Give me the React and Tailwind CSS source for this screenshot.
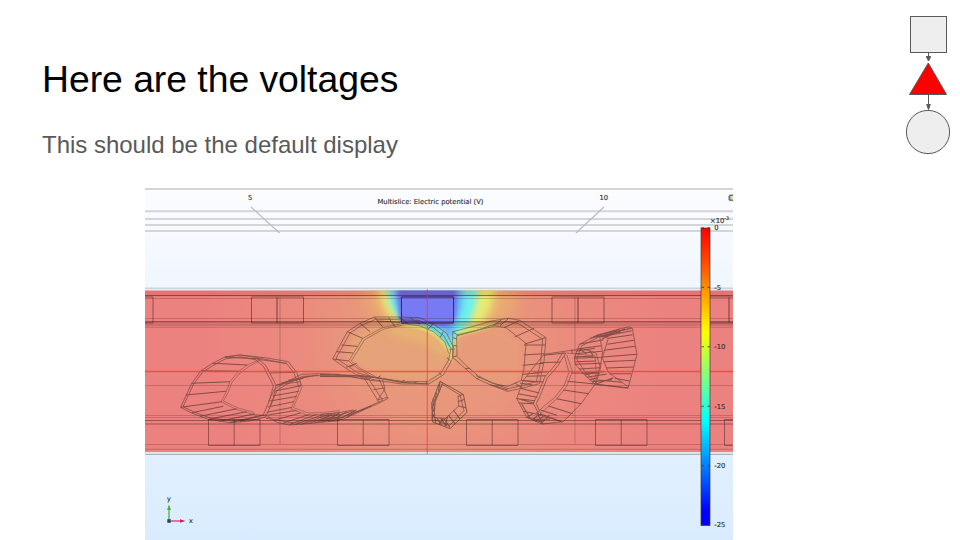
const TOP_ELECTRODES = [
  [127, 26], [251.5, 52], [401.5, 52], [552, 52], [703, 52],
];
const BOTTOM_ELECTRODES = [208.5, 337.5, 466.5, 595.5, 724.5];
const TICKS = [
  [0, '0'], [59.5, '-5'], [119, '-10'], [178.5, '-15'], [238, '-20'], [297, '-25'],
];

function Field() {
  return (
    <g>
      <rect x="145" y="290.5" width="588" height="161.5" fill="url(#base)" />
      <g clipPath="url(#slab)">
        <path d="M362 270L372 318L405 330L440 340L451 357L458 342L490 330L510 316L520 270Z" fill="#e9b46c" opacity=".8" filter="url(#blur7)" />
        <path d="M371 270L387 314L402 324L440 337L450 353L458 337L482 326L491 308L500 270Z" fill="#e8ec74" filter="url(#blur4)" />
        <path d="M380 270L392 308L403 322L423 325L444 336L451 350L455 335L469 324L476 304L481 270Z" fill="#6cf2ee" filter="url(#blur3)" />
        <path d="M389 270L396 304L403 322L425 324L441 329L450 342L454 330L462 306L465 270Z" fill="#6eaaf6" filter="url(#blur3)" />
        <path d="M396 270L400 321L425 323L445 326L455 318L458 270Z" fill="#6668e8" filter="url(#blur2)" />
        <path d="M354 334L378 322L402 325L424 328L440 339L448 353L445 372L431 382L405 381L372 374L346 357Z" fill="#e6a278" filter="url(#blur2)" />
        <path d="M458 336L495 328L520 343L519 376L506 387L480 380L456 358Z" fill="#e79c7a" filter="url(#blur2)" opacity=".95" />
        <path d="M380 325L424 326L441 337L449 352L446 358L425 344L396 337Z" fill="#e6b970" filter="url(#blur4)" opacity=".7" />
        <path d="M405 325.5Q434 326 448 349" fill="none" stroke="#dfdc70" strokeWidth="3" filter="url(#blur1)" />
        <path d="M424 324.5Q441 330 450.5 348" fill="none" stroke="#58dde6" strokeWidth="3.2" filter="url(#blur1)" />
        <path d="M451 346L451 362M458 334.5L495 324.5" fill="none" stroke="#d5df70" strokeWidth="2.5" filter="url(#blur1)" />
        <rect x="402" y="297" width="52" height="26.5" fill="#787af4" />
        <rect x="145" y="290" width="588" height="6.5" fill="#b02020" opacity=".14" />
        <rect x="145" y="321" width="588" height="4" fill="#702020" opacity=".16" />
      </g>
    </g>
  );
}

function Structure() {
  return (
    <g fill="none" stroke="#4b2020" strokeWidth="1">
      <path opacity=".58" d="M145 295.5H733M145 321.8H733" />
      <path opacity=".25" d="M145 298.5H733M145 318.5H733M145 325.3H733M145 327.3H733M145 385.5H733M145 415.5H733M145 417.5H733M145 444.5H733M145 449.3H733" />
      <path opacity=".5" d="M145 420.5H733M145 424H733" />
      <path opacity=".25" d="M280 297V444M575 297V444" />
      <g opacity=".55">
        {TOP_ELECTRODES.map(([x, w]) => (
          <path key={x} d={`M${x} 297h${w}v26h-${w}z`} />
        ))}
        <path d="M277 297v26M578 297v26M729 297v26" strokeWidth="1.3" />
      </g>
      <path d="M401.5 297H453.5V323H401.5Z" stroke="#252570" opacity=".75" />
      <g opacity=".5">
        {BOTTOM_ELECTRODES.map((x) => (
          <path key={x} d={`M${x} 419.5h51.5v26h-51.5zM${x + 25.7} 419.5v26`} />
        ))}
      </g>
    </g>
  );
}

function SliceLines() {
  return (
    <g fill="none">
      <path d="M145 371.5H733" stroke="#fb3a34" strokeWidth="1.3" opacity=".75" />
      <path d="M427.3 289V454" stroke="#f0302c" strokeWidth="1.2" opacity=".55" />
    </g>
  );
}

function Cells() {
  return (
    <g fill="none" stroke="#35201c" strokeWidth="2.4" strokeLinejoin="round" opacity=".55">
      <g transform="translate(140 285) scale(.33333)">
        <path d="M122 367L155 295L183 257L218 235L255 216L300 210L350 218L378 242L408 300L398 348L378 395L330 408L270 413L205 403L155 384Z" />
        <path d="M129 365L161 297L188 261L222 240L258 221L302 216L346 224L370 244L400 302L388 348L370 389L326 402L272 407L208 398L158 379Z" />
        <path d="M365 220L322 240L295 260L270 290L258 322L243 350L290 374L340 388L378 392M360 226L328 244L300 264L276 292L264 323L250 348L294 369L342 382" opacity=".7" />
        <path strokeWidth="3.2" d="M122 367L245 350M137 330L258 319M155 295L270 290M183 257L295 259M218 235L322 240M255 216L358 222M155 383L250 364M180 394L290 371M205 403L320 380M238 409L345 386M268 413L374 390M300 410L350 393" />
        <path d="M255 216L300 210L375 218L445 230L470 262L484 300M350 218L440 236L462 264L476 304M360 224L440 235M388 264L466 262M408 300L482 290" />
        <path d="M385 350L404 312L440 290L485 268L540 266L600 268M390 362L412 315L444 296L488 274L540 272L600 274" />
        <path d="M482 296L470 330L453 372L500 390L550 388L600 383M488 302L476 330L460 368L505 384L552 382L600 377" opacity=".7" />
        <path d="M375 388L410 412L448 420L500 416L550 411L600 407M378 400L414 405L450 413L500 410L600 400" />
        <path strokeWidth="2.9" d="M405 318L484 302M398 333L476 319M391 348L470 334M384 366L462 350M380 382L456 367M410 300L490 280M424 294L510 273M445 286L534 270M385 390L470 376M404 405L482 384M430 414L506 389M448 419L530 388M464 419L550 389M484 418L567 388M505 416L586 387M524 414L600 388M545 412L600 394M565 410L600 400" />
      </g>
      <g transform="translate(320 285) scale(.33333)">
        <path strokeWidth="3.4" d="M0 268L90 271L170 278L245 292L326 297M0 274L90 275L150 285" />
        <path d="M45 270L120 273L136 285L178 354L120 380L70 402L0 409M120 279L146 282L188 346L125 374L68 396L0 403M176 280L204 340L178 354M188 284L195 312L172 346M150 286L184 289M160 314L194 309M172 345L202 337M0 388L60 383L100 375M0 394L60 389L110 375" />
        <path strokeWidth="3.2" d="M0 407L36 386M20 406L58 384M40 404L79 381M62 400L108 376M80 395L135 370M105 384L155 362" />
        <path d="M38 222L82 140L120 115L163 96L236 96L300 98L345 120L380 145L402 190L396 225L370 270L326 297L245 297L165 285L110 270L75 248Z" />
        <path d="M48 220L90 144L125 121L167 103L236 104L297 106L340 128L372 153L393 191L386 225L362 265L323 290L247 289L168 278L114 264L82 242Z" />
        <path d="M86 228L128 160L188 128L245 115L298 122L340 140L374 170L386 205M94 228L134 164L192 132L245 121M86 228L112 250L160 278M94 228L120 250L175 280" opacity=".8" />
        <path strokeWidth="3" d="M38 222L86 228M50 200L99 204M65 180L112 184M82 140L128 160M120 115L150 140M163 96L188 126M170 108L240 112M205 97L226 126M236 96L265 116M270 98L300 118M82 246L110 235M110 270L150 275M78 246L100 242M170 280L182 272M242 291L254 286M282 294L292 289M320 297L318 287M364 271L357 262M392 228L381 218M402 192L389 193M370 140L360 158M340 115L325 132M240 108L300 108" />
        <path d="M360 289L430 328L441 382L390 431L338 411L335 355Z" strokeWidth="3" />
        <path d="M366 297L420 330L432 377L388 422L345 404L342 355Z" />
        <path d="M360 289L368 295L346 350L342 397L375 402L416 363L414 335" />
        <path strokeWidth="3.2" d="M360 292L355 320M350 322L343 352M340 340L336 405M413 335L429 328M415 350L434 343M416 363L438 368M400 375L420 402M385 390L405 416M372 400L390 428M362 400L380 424M351 400L364 420M344 398L347 413M335 370L344 355M336 385L344 370M336 400L344 386M370 401L357 418M383 394L375 423" />
      </g>
      <g transform="translate(440 285) scale(.33333)">
        <path d="M38 140L100 124L155 108L205 100L240 106L318 158L312 230L298 296L248 309L202 319L150 299L110 281L75 250L38 217Z" />
        <path d="M50 153L108 137L160 119L202 110L236 116L308 163L302 230L289 290L244 302L204 311L155 292L116 274L84 247L51 214Z" />
        <path d="M50 150L110 136L165 123L198 128L258 175L252 250L244 286L204 304L160 296L108 272" />
        <path strokeWidth="3" d="M38 140L55 152M38 158L51 162M38 182L50 182M38 216L50 213M75 250L91 250M110 281L122 276M150 299L204 315M165 303L190 302M184 105L160 122M205 101L180 122M238 107L192 128M282 130L224 156M318 158L254 177M316 180L252 180M314 206L251 210M310 235L248 241M304 263L247 268M294 291L244 286M278 300L240 294M248 309L224 294" />
        <path d="M312 208L380 198L430 192L468 204L480 245L465 298L425 354L370 410L306 417L260 397L230 340L250 286L290 235Z" />
        <path d="M370 200L347 238L315 275L292 330L280 355L298 390L365 410M378 203L354 242L322 279L300 333L289 356L303 388" />
        <path d="M380 208L397 260L380 304L352 340L324 365L300 388M373 212L387 262L373 300L344 338L315 361L292 382M380 204L465 213L469 265L457 298" opacity=".8" />
        <path strokeWidth="3.1" d="M310 211L376 204M301 233L360 231M280 261L322 261M260 274L318 272M250 287L311 291M240 310L298 324M234 326L292 337M230 340L282 355M236 354L282 356M250 379L302 390M260 397L306 412M275 403L330 403M290 382L308 416M300 386L365 410M325 363L398 386M350 341L424 356M370 315L447 326M382 289L466 297M393 264L479 265M302 375L350 391M245 357L270 399M280 385L260 397M294 391L275 405M310 394L287 410M328 390L304 415M395 193L397 207M420 192L440 207M448 196L460 212M240 342L285 347" />
      </g>
      <g transform="translate(560 285) scale(.33333)">
        <path d="M43 220L58 178L115 149L207 125L217 130L231 209L204 310L106 298L74 270L46 238Z" />
        <path d="M51 220L65 183L120 154L207 131M113 149L145 160L127 218L145 262L204 305M118 150L128 200L120 255L106 300M50 222L76 262L109 292" />
        <path strokeWidth="3.2" d="M58 178L130 164M52 192L123 182M46 206L126 199M43 220L127 217M45 238L124 235M57 252L121 248M74 270L117 260M88 285L111 278M106 298L160 278M115 150L215 130M122 156L215 137M145 160L218 149M142 178L221 166M132 196L226 184M127 216L231 208M131 230L228 226M139 249L221 246M148 266L213 266M164 280L209 288M106 298L204 308M113 285L186 292M48 199L105 190M43 215L100 214M47 230L108 228M65 265L132 260M80 277L140 267M95 290L156 284M90 160L182 140M100 155L180 132M127 161L195 131" />
      </g>
    </g>
  );
}

function ColorScale() {
  return (
    <g>
      <rect x="701" y="228" width="9" height="297.5" fill="url(#rainbow)" stroke="#333" strokeOpacity=".65" strokeWidth="1" />
      <g fill="#333" stroke="#333" strokeWidth=".15" fontSize="6.8">
        {TICKS.map(([offset, label]) => (
          <g key={label}>
            <path d={`M701.5 ${227.8 + offset}h2.5M707.5 ${227.8 + offset}h2.5`} stroke="#333" strokeWidth=".8" />
            <text x="714.3" y={230 + offset}>{label}</text>
          </g>
        ))}
        <text x="710" y="222.5">×10<tspan fontSize="4.8" dy="-3">-3</tspan></text>
      </g>
    </g>
  );
}

function PotentialPlot() {
  return (
    <svg className="block h-[353px] w-[588px]" viewBox="145 187 588 353" fontFamily="'DejaVu Sans', sans-serif">
      <defs>
        <linearGradient id="sky" x2="0" y2="1">
          <stop stopColor="#fbfcff" />
          <stop offset=".3" stopColor="#f0f6ff" />
          <stop offset=".75" stopColor="#e1f0ff" />
          <stop offset="1" stopColor="#d9ecff" />
        </linearGradient>
        <radialGradient id="base" gradientUnits="userSpaceOnUse" cx="435" cy="335" r="230">
          <stop stopColor="#e89d7b" />
          <stop offset=".35" stopColor="#e9967c" />
          <stop offset=".6" stopColor="#eb8a7e" />
          <stop offset="1" stopColor="#ec827f" />
        </radialGradient>
        <linearGradient id="rainbow" x2="0" y2="1">
          <stop stopColor="#f00" />
          <stop offset=".1" stopColor="#ff4000" />
          <stop offset=".35" stopColor="#ff0" />
          <stop offset=".65" stopColor="#0ff" />
          <stop offset=".95" stopColor="#00f" />
          <stop offset="1" stopColor="#00f" />
        </linearGradient>
        <clipPath id="slab"><rect x="145" y="290.5" width="588" height="161.5" /></clipPath>
        <filter id="blur1"><feGaussianBlur stdDeviation="1" /></filter>
        <filter id="blur2"><feGaussianBlur stdDeviation="2" /></filter>
        <filter id="blur3"><feGaussianBlur stdDeviation="3" /></filter>
        <filter id="blur4"><feGaussianBlur stdDeviation="4.5" /></filter>
        <filter id="blur7" x="-50%" y="-50%" width="200%" height="200%"><feGaussianBlur stdDeviation="9" /></filter>
      </defs>
      <rect x="145" y="188" width="588" height="352" fill="url(#sky)" />
      <path d="M145 189H733" stroke="#d3d4da" strokeWidth="1.8" />
      <path d="M145 211.3H733M145 219H733M145 225H733M145 231H733" stroke="#d3d5d9" strokeWidth="2" />
      <path d="M145 288.3H733" stroke="#c9d3df" strokeWidth="1.8" />
      <path d="M145 454.4H733" stroke="#a9b6c5" strokeWidth="1.2" />
      <path d="M145 452.5H733" stroke="#e7e3e7" strokeWidth="1" />
      <path d="M251 207L279.5 233M604 207L576 233" stroke="#b9babd" strokeWidth="1.1" />
      <Field />
      <Structure />
      <Cells />
      <SliceLines />
      <g fill="#333" stroke="#333" strokeWidth=".15" fontSize="6.8">
        <text x="248" y="200">5</text>
        <text x="599.5" y="200">10</text>
        <text x="377.5" y="203.8" fontSize="6.9" textLength="106" lengthAdjust="spacingAndGlyphs">Multislice: Electric potential (V)</text>
        <text x="167" y="501" fontSize="6.5">y</text>
        <text x="189" y="523" fontSize="6.5">x</text>
      </g>
      <path d="M733 194.5h-3l-1.5 1.5v4l1.5 1h3z" fill="#5c7890" />
      <path d="M733 196h-2.5v3.5h2.5z" fill="#f0e28a" />
      <ColorScale />
      <path d="M169 520V509" stroke="#6fba62" strokeWidth="1.6" />
      <path d="M169 504.5L171 510H167Z" fill="#48ae42" />
      <path d="M171 521H181" stroke="#df4b88" strokeWidth="1.5" />
      <path d="M185.5 521L180 519.2V522.8Z" fill="#d9185e" />
      <rect x="167.3" y="519.2" width="3.5" height="3.6" fill="#294566" />
    </svg>
  );
}

function FlowKey() {
  return (
    <svg className="h-[150px] w-[50px] shrink-0" viewBox="903 10 50 150" stroke="#595959" strokeWidth="1">
      <rect x="910.5" y="16.5" width="36" height="36" fill="#eee" />
      <path d="M928.5 53V58M928.5 95V105" />
      <path d="M926.3 56.5H930.7L928.5 61Z" fill="#595959" />
      <path d="M926.7 104.5H930.3L928.5 109.5Z" fill="#595959" />
      <path d="M928.3 63L946.5 94.5H909.5Z" fill="#f00" />
      <circle cx="928" cy="132" r="21.6" fill="#eee" />
    </svg>
  );
}

export default function App() {
  return (
    <main className="flex h-[540px] w-[960px] justify-between overflow-hidden bg-white pr-[7px] font-['Liberation_Sans',Arial,sans-serif]">
      <div className="flex flex-col pt-[58px]">
        <h1 className="h-[43px] pl-[42px] text-[37.33px] leading-[43px] tracking-[-0.03px] text-black">Here are the voltages</h1>
        <p className="mt-[30px] h-7 pl-[42px] text-2xl leading-7 tracking-[-0.01px] text-[#595959]">This should be the default display</p>
        <figure className="mt-[28px] ml-[145px]">
          <PotentialPlot />
        </figure>
      </div>
      <aside className="pt-[10px]">
        <FlowKey />
      </aside>
    </main>
  );
}
